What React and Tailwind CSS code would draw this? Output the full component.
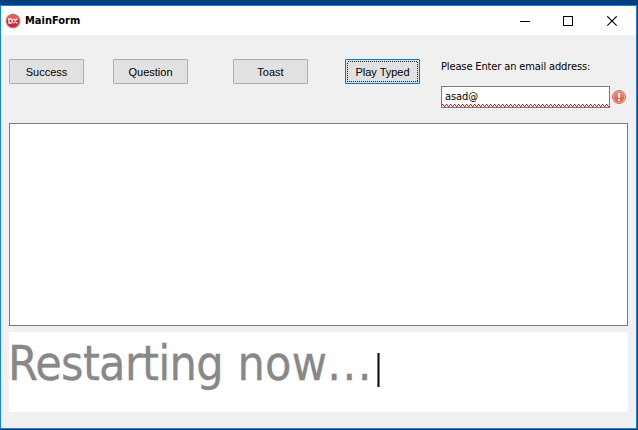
import React from 'react';

const tahoma = "font-['DejaVu_Sans_Condensed','DejaVu_Sans',sans-serif]";

function PushButton({ children, className = '', focused = false }) {
  return (
    <button
      type="button"
      className={`relative h-[25px] w-[75px] shrink-0 rounded-[1px] border bg-[#e1e1e1] pt-px text-center font-['Liberation_Sans',Arial,sans-serif] text-[11px] leading-[22px] whitespace-nowrap text-black ${focused ? 'border-[#0078d7]' : 'border-[#adadad]'} ${className}`}
    >
      {children}
      {focused && (
        <svg className="absolute top-px left-px" width="71" height="21" shapeRendering="crispEdges">
          <rect x="0.5" y="0.5" width="70" height="20" fill="none" stroke="#222" strokeDasharray="1 1" />
        </svg>
      )}
    </button>
  );
}

function AppIcon() {
  return (
    <svg width="16" height="16" viewBox="0 0 16 16">
      <circle cx="8" cy="8" r="7.6" fill="#a9a4a4" />
      <circle cx="8" cy="8" r="6.5" fill="#dc2430" />
      <path d="M2 7a6 5.6 0 0 1 12 0Z" fill="#ea5960" />
      <path d="M4 5.8v4.4h1.2c2.8 0 2.8-4.4 0-4.4ZM8.6 5.6l3.5 4.8M12.1 5.6l-3.5 4.8" fill="none" stroke="#fff" strokeWidth="1.25" />
    </svg>
  );
}

function ErrorIcon() {
  return (
    <svg width="14" height="14" viewBox="0 0 14 14">
      <circle cx="7" cy="7" r="6.5" fill="#f4b0a4" stroke="#cf6b5f" />
      <circle cx="7" cy="7" r="5.2" fill="#e96352" />
      <path d="M2 7a5 5 0 0 1 10 0Z" fill="#ee7d6d" />
      <path d="M6 3h2v5H6ZM6 9h2v2H6Z" fill="#fff" />
    </svg>
  );
}

function TitleBar() {
  return (
    <header className="flex h-[29px] items-center bg-white pl-1">
      <AppIcon />
      <h1 className={`ml-1 pt-px ${tahoma} text-[11px] font-bold text-black`}>MainForm</h1>
      <svg className="mt-px ml-auto" width="118" height="11" shapeRendering="crispEdges" fill="none" stroke="#000">
        <path d="M2 5.5h10" />
        <rect x="45.5" y="0.5" width="9" height="9" />
        <path d="M89.3 0.3l9.4 9.4M98.7 0.3l-9.4 9.4" shapeRendering="auto" strokeWidth="1.1" />
      </svg>
    </header>
  );
}

function EmailField() {
  return (
    <div className={`ml-[21px] ${tahoma} text-black`}>
      <label htmlFor="email" className="block h-[27px] text-[11px] leading-[16px] tracking-[-0.13px] whitespace-nowrap">
        Please Enter an email address:
      </label>
      <div className="flex items-center gap-[2px]">
        <div className="flex h-[22px] w-[169px] flex-col border border-[#7a7a7a] bg-white">
          <div id="email" className="h-[17px] pl-[3px] text-[11px] leading-[20px] tracking-[-0.1px]">asad@</div>
          <svg width="167" height="3" shapeRendering="crispEdges">
            <defs>
              <pattern id="squiggle" width="4" height="3" patternUnits="userSpaceOnUse">
                <path d="M0 0h1v1H0ZM1 1h1v1H1ZM2 2h1v1H2ZM3 1h1v1H3Z" fill="#f00" />
              </pattern>
            </defs>
            <rect width="167" height="3" fill="url(#squiggle)" />
          </svg>
        </div>
        <ErrorIcon />
      </div>
    </div>
  );
}

export default function App() {
  return (
    <div className="h-[430px] w-[638px] overflow-hidden bg-[#003e7e] pt-[5px]">
      <main className="h-[424px] w-[637px] border border-[#1883d7] bg-[#f0f0f0]">
        <TitleBar />
        <div className="flex flex-col pl-2">
          <div className="flex h-[88px] items-start pt-6">
            <PushButton>Success</PushButton>
            <PushButton className="ml-[29px]">Question</PushButton>
            <PushButton className="ml-[45px]">Toast</PushButton>
            <PushButton className="ml-[37px]" focused>Play Typed</PushButton>
            <EmailField />
          </div>
          <div className="h-[203px] w-[619px] border border-[#7a7a7a] bg-white" />
          <div className="mt-[6px] flex h-[80px] w-[619px] bg-white">
            <p className={`-ml-px flex w-[369px] ${tahoma} text-[48px] leading-[62px] whitespace-pre text-[#888] [-webkit-text-stroke:0.3px_#888]`}>
              <span className="w-[229.5px] tracking-[-0.68px]">Restarting </span>
              <span className="tracking-[0.2px]">now</span>
              <span className="tracking-[1.5px]">...</span>
            </p>
            <span className="mt-[21px] h-[34px] w-[3px] border-x border-[#777] bg-[#111]" />
          </div>
        </div>
      </main>
    </div>
  );
}
